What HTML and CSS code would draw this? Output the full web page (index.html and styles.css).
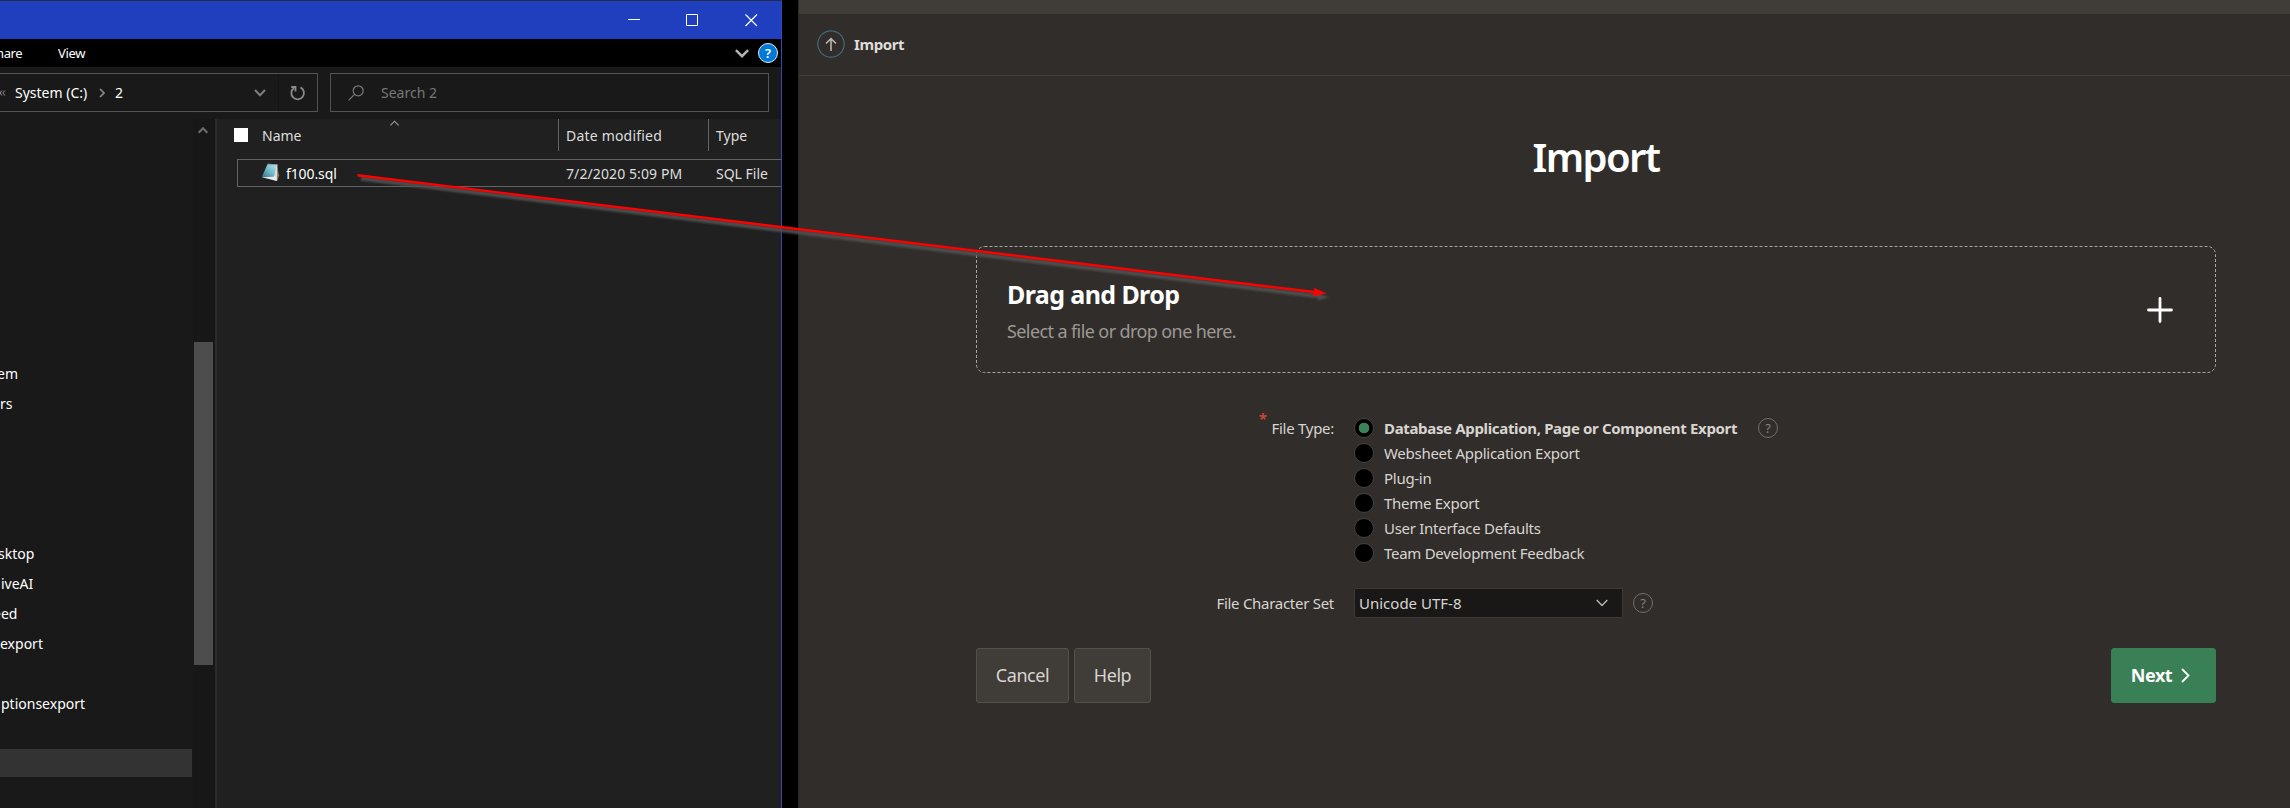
FILE: index.html
```html
<!DOCTYPE html>
<html lang="en">
<head>
<meta charset="utf-8">
<title>Import</title>
<link rel="stylesheet" href="styles.css">
</head>
<body>
<div class="desktop">
  <section class="explorer">
    <div class="titlebar">
      <svg width="130" height="14" viewBox="0 0 130 14" fill="none" stroke="#fff" stroke-width="1"><path d="M0 6.5h12M58.5 1.5h11v11h-11z"/><path d="M117.5 1.5l11.5 11.5M129 1.5l-11.5 11.5" stroke-width="1.2"/></svg>
    </div>
    <div class="ribbon">
      <span class="tab tab-share">hare</span><span class="tab tab-view">View</span>
      <div class="ribbon-tools">
        <svg width="14" height="9" viewBox="0 0 14 9" fill="none" stroke="#b4b4b4" stroke-width="2.4"><path d="M.9 1.2L7 7.2l6.1-6"/></svg>
        <span class="win-help">?</span>
      </div>
    </div>
    <div class="address">
      <div class="path">
        <svg class="laquo" width="6" height="6" viewBox="0 0 6 6" fill="none" stroke="#9a9a9a" stroke-width="1"><path d="M2 .5L0 3l2 2.500M5 .5L2.800 3 5 5.500"/></svg>
        <span class="crumb crumb-drive">System (C:)</span>
        <svg class="sep" width="6" height="10" viewBox="0 0 6 10" fill="none" stroke="#8a8a8a" stroke-width="1.7"><path d="M1 1l4 4-4 4"/></svg>
        <span class="crumb">2</span>
        <svg class="drop" width="12" height="8" viewBox="0 0 12 8" fill="none" stroke="#7d7d7d" stroke-width="2"><path d="M1 1l5 5.300L11 1"/></svg>
        <div class="refresh"><svg width="16" height="16" viewBox="0 0 16 16" fill="none" stroke="#8b8b8b" stroke-width="1.800"><path d="M10.500 2.400A6.300 6.300 0 1 1 4 2.900"/><path d="M1.300 2h4.200v4.500"/></svg></div>
      </div>
      <div class="search">
        <svg width="16" height="16" viewBox="0 0 16 16" fill="none" stroke="#7a7a7a" stroke-width="1.200"><circle cx="10.200" cy="5.800" r="5"/><path d="M6.500 9.400L.6 15.300"/></svg>
        <span>Search 2</span>
      </div>
    </div>
    <div class="panes">
      <nav class="tree">
        <div class="node n1">em</div>
        <div class="node n2">ers</div>
        <div class="node"></div><div class="node"></div><div class="node"></div><div class="node"></div>
        <div class="node n3">sktop</div>
        <div class="node n4">iveAI</div>
        <div class="node n5">eed</div>
        <div class="node n6">export</div>
        <div class="node"></div>
        <div class="node n7">ptionsexport</div>
        <div class="node"></div>
        <div class="node selected"></div>
      </nav>
      <div class="scroll">
        <svg width="10" height="8" viewBox="0 0 10 8" fill="none" stroke="#6c6c6c" stroke-width="2"><path d="M.7 6.800L5 2.200l4.300 4.600"/></svg>
        <div class="thumb"></div>
      </div>
      <div class="files">
        <div class="file-head">
          <span class="check"></span>
          <span class="col-name">Name</span>
          <svg class="sort" width="9" height="6" viewBox="0 0 9 6" fill="none" stroke="#a0a0a0" stroke-width="1.100"><path d="M.4 5.300L4.500 1.200l4.100 4.100"/></svg>
          <span class="col-date">Date modified</span>
          <span class="col-type">Type</span>
        </div>
        <div class="file-row">
          <svg class="file-icon" width="19" height="19" viewBox="0 0 19 19">
            <defs><linearGradient id="pad" x1="1" y1="0" x2="0" y2="1"><stop offset="0" stop-color="#b9e4ec"/><stop offset=".5" stop-color="#6fb9c9"/><stop offset="1" stop-color="#2e6f80"/></linearGradient></defs>
            <path d="M15.500 1.500l2.700 11-1.800 5.200-1.400-.8z" fill="#8a744e"/>
            <path d="M6.500 .8L16.500 1.300 16 18 10 16z" fill="#d8dfe0"/>
            <path d="M6.500 1.300L15.600 2 13 14.500.8 14z" fill="url(#pad)"/>
            <path d="M13.500 12.500L16 18 .6 14.200l12-.5z" fill="#e6eaea"/>
            <path d="M6.500 1.200l10 .6" stroke="#4b5558" stroke-dasharray="1 1"/>
          </svg>
          <span class="file-name">f100.sql</span>
          <span class="file-date">7/2/2020 5:09 PM</span>
          <span class="file-type">SQL File</span>
        </div>
      </div>
    </div>
  </section>

  <section class="apex">
    <div class="strip"></div>
    <header class="crumbs">
      <svg width="28" height="28" viewBox="0 0 28 28" fill="none"><circle cx="14" cy="14" r="13.200" stroke="#3f6b77" stroke-width="1.200"/><path d="M14 21V9M9 13.500L14 8.700l5 4.800" stroke="#b9b5b0" stroke-width="1.600"/></svg>
      <span>Import</span>
    </header>
    <main class="wizard">
      <h1>Import</h1>
      <div class="dropzone">
        <svg class="dash" width="1240" height="128"><rect x=".5" y=".5" width="1239" height="126" rx="8" fill="none" stroke="#aaa7a3" stroke-dasharray="3 2"/></svg>
        <div>
          <h2>Drag and Drop</h2>
          <p>Select a file or drop one here.</p>
        </div>
        <svg class="plus" width="26" height="26" viewBox="0 0 26 26" stroke="#fff" stroke-width="2.800" stroke-linecap="round"><path d="M13 1.500v23M1.500 13h23"/></svg>
      </div>
      <div class="field types">
        <label class="name"><i class="star">*</i><span class="t-type">File Type:</span></label>
        <div class="options">
          <div class="option on"><i class="radio"></i><span>Database Application, Page or Component Export</span></div>
          <div class="option"><i class="radio"></i><span>Websheet Application Export</span></div>
          <div class="option"><i class="radio"></i><span>Plug-in</span></div>
          <div class="option"><i class="radio"></i><span>Theme Export</span></div>
          <div class="option"><i class="radio"></i><span>User Interface Defaults</span></div>
          <div class="option"><i class="radio"></i><span>Team Development Feedback</span></div>
        </div>
        <span class="help">?</span>
      </div>
      <div class="field charset">
        <label class="name"><span>File Character Set</span></label>
        <div class="select"><span>Unicode UTF-8</span><svg width="12" height="8" viewBox="0 0 12 8" fill="none" stroke="#bcb9b5" stroke-width="1.400"><path d="M.7 1L6 6.500 11.300 1"/></svg></div>
        <span class="help">?</span>
      </div>
      <div class="buttons">
        <div class="btn cancel"><span>Cancel</span></div>
        <div class="btn assist"><span>Help</span></div>
        <div class="btn next"><span>Next</span><svg width="9" height="15" viewBox="0 0 9 15" fill="none" stroke="#fff" stroke-width="1.800"><path d="M1 1l6.500 6.500L1 14"/></svg></div>
      </div>
    </main>
  </section>

  <svg class="arrow" width="2290" height="808" viewBox="0 0 2290 808">
    <defs><filter id="soft" x="-5%" y="-20%" width="110%" height="140%"><feGaussianBlur stdDeviation="1.100"/></filter></defs>
    <g filter="url(#soft)"><path d="M361 178.500L1316 296" stroke="#505050" stroke-width="4"/><path d="M1314 292l15 5.500-11 2.500z" fill="#505050"/></g>
    <path d="M357.500 175.300L1316 292.300" stroke="#f00" stroke-width="2.400"/>
    <path d="M1314.500 288l12 5.500-13.500 2.800z" fill="#f00"/>
  </svg>
</div>
</body>
</html>
```
FILE: styles.css
```css
* { box-sizing: border-box; }
html, body { height: 808px; overflow: hidden; }
body { margin: 0; background: #000; font-family: "Noto Sans", "Open Sans", sans-serif; }
h1, h2, p { margin: 0; }
svg { display: block; flex: none; }
span { white-space: nowrap; }
.desktop { position: relative; display: flex; gap: 16px; width: 2290px; height: 808px; overflow: hidden; }

/* File manager window */
.explorer { display: flex; flex-direction: column; width: 782px; height: 808px; flex: none; overflow: hidden; background: #191919; border-top: 1px solid #252b45; border-right: 1px solid #3448b8; font-size: 14px; color: #fff; }
.titlebar { height: 38px; background: #203fbe; display: flex; justify-content: flex-end; padding: 12px 23px 0 0; }
.ribbon { height: 28px; background: #000; display: flex; align-items: center; font-size: 13px; }
.tab-share { width: 62px; margin-left: -4px; letter-spacing: -.4px; }
.tab-view { letter-spacing: -.3px; }
.ribbon-tools { display: flex; align-items: center; gap: 9px; margin-left: auto; padding-right: 3px; }
.win-help { width: 20px; height: 20px; border: 1px solid #e4eefa; border-radius: 50%; background: #0078d7; color: #fff; text-align: center; font-weight: 600; font-size: 13px; line-height: 18px; }
.address { display: flex; gap: 12px; height: 52px; padding: 6px 0 7px; }
.path { width: 318px; height: 39px; border: 1px solid #535353; border-left: 0; display: flex; align-items: center; }
.laquo { width: 6px; }
.crumb-drive { width: 73px; margin-left: 9px; }
.sep { margin: 0 10px 0 11px; }
.drop { margin-left: auto; }
.refresh { width: 39px; height: 37px; margin-left: 12px; border-left: 1px solid #141414; display: flex; align-items: center; justify-content: center; }
.search { width: 439px; height: 39px; border: 1px solid #535353; display: flex; align-items: center; gap: 17px; padding-left: 17px; color: #777; }
.panes { display: flex; flex: 1; min-height: 0; }
.tree { width: 193px; padding-top: 240px; overflow: hidden; }
.node { height: 30px; line-height: 29px; white-space: nowrap; }
.n1 { text-indent: -3px; }
.n2 { text-indent: -8px; }
.n3 { text-indent: -2px; }
.n4 { text-indent: 1px; }
.n5 { text-indent: -7px; }
.n7 { text-indent: 1px; }
.selected { width: 192px; height: 28px; background: #333; }
.scroll { width: 22px; background: #171717; display: flex; flex-direction: column; align-items: flex-start; padding: 7px 0 0 1px; }
.scroll svg { margin-left: 4px; }
.thumb { width: 19px; height: 323px; margin-top: 208px; background: #4d4d4d; }
.files { flex: 1; background: #202020; border-left: 2px solid #2b2b2b; }
.file-head { display: flex; height: 32px; color: #dedede; }
.check { width: 14px; height: 14px; margin: 9px 0 0 17px; background: #fff; }
.col-name { width: 128px; margin-left: 14px; line-height: 33px; }
.sort { margin-top: 1px; }
.col-date { width: 150px; margin-left: auto; padding-left: 7px; border-left: 1px solid #636363; line-height: 33px; letter-spacing: .2px; }
.col-type { width: 73px; padding-left: 7px; border-left: 1px solid #636363; line-height: 33px; }
.file-row { display: flex; align-items: center; height: 28px; margin: 8px 0 0 20px; border: 1px solid #636363; border-right: 0; color: #dedede; }
.file-icon { margin: -2px 0 0 23px; }
.file-name { color: #fff; width: 274px; margin-left: 6px; letter-spacing: -.1px; }
.file-date { width: 150px; margin-left: 6px; letter-spacing: .1px; }

/* Application page */
.apex { flex: 1; background: #312d2a; border-left: 1px solid #2a2724; color: #d8d5d1; font-size: 15px; }
.strip { height: 14px; background: #403c38; }
.crumbs { height: 62px; border-bottom: 1px solid #413d39; display: flex; align-items: center; gap: 9px; padding: 0 0 1px 18px; font-weight: 700; letter-spacing: -.4px; color: #dfdcd9; }
.wizard { width: 1240px; margin-left: 177px; }
h1 { margin-top: 53px; height: 56px; line-height: 56px; font-size: 40px; font-weight: 600; letter-spacing: -1.6px; text-align: center; color: #fff; }
.dropzone { position: relative; display: flex; align-items: center; justify-content: space-between; height: 127px; margin-top: 61px; padding: 2px 43px 0 31px; }
.plus { margin-top: -2px; }
.dash { position: absolute; left: 0; top: 0; }
h2 { font-size: 25px; line-height: 34px; font-weight: 700; letter-spacing: -.6px; color: #fff; }
.dropzone p { margin-top: 6px; font-size: 18px; line-height: 28px; letter-spacing: -.6px; color: #9c9894; }
.field { display: flex; }
.types { margin-top: 42px; height: 150px; }
.charset { margin-top: 23px; height: 30px; align-items: center; }
.name { width: 358px; display: flex; justify-content: flex-end; line-height: 26px; letter-spacing: -.28px; }
.star { margin: -10px 5px 0 0; font-style: normal; color: #c74634; font-size: 15px; font-weight: 700; }
.options { width: 404px; margin-left: 20px; }
.option { display: flex; align-items: center; gap: 10px; height: 25px; letter-spacing: -.28px; }
.on { font-weight: 700; letter-spacing: -.34px; }
.radio { width: 20px; height: 20px; flex: none; border: 1px solid #45413e; border-radius: 50%; background: #000; }
.on .radio { background: radial-gradient(circle, #3b8257 5px, #000 5.600px); }
.help { width: 20px; height: 20px; margin-top: 3px; border: 1px solid #73706c; border-radius: 50%; text-align: center; font-size: 13px; line-height: 18px; color: #85827e; }
.charset .help { margin: 0 0 0 10px; }
.select { width: 269px; height: 30px; margin-left: 20px; padding: 0 14px 0 4px; display: flex; align-items: center; justify-content: space-between; background: #191816; border: 1px solid #3c3936; border-radius: 2px; }
.buttons { display: flex; gap: 5px; margin-top: 30px; }
.btn { height: 55px; display: flex; align-items: center; justify-content: center; border: 1px solid #54504b; border-radius: 3px; background: #403c38; font-size: 18px; letter-spacing: -.45px; padding-bottom: 1px; }
.cancel { width: 93px; }
.assist { width: 77px; }
.next { width: 105px; margin-left: auto; gap: 9px; padding-right: 6px; background: #3a8056; border-color: #3a8056; color: #fff; font-weight: 700; }

/* Annotation over both windows */
.arrow { position: absolute; left: 0; top: 0; }
```
